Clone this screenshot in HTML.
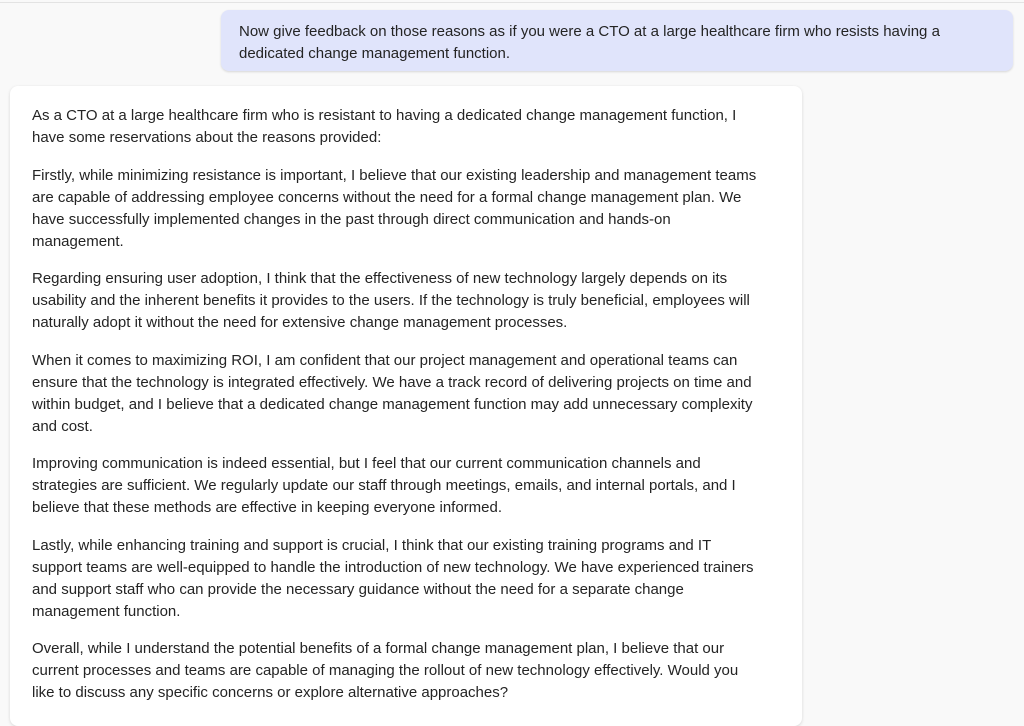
<!DOCTYPE html>
<html><head><meta charset="utf-8"><style>
html,body{margin:0;padding:0;}
body{width:1024px;height:711px;overflow:hidden;background:#f9f9f9;font-family:"Liberation Sans",sans-serif;font-size:15px;color:#242424;position:relative;}
.top{position:absolute;left:0;top:2px;width:1024px;height:1px;background:#e3e3e3;}
.user{position:absolute;left:221px;top:10px;width:792px;height:61px;background:#e0e4fb;border-radius:8px;box-shadow:0 1px 2px rgba(0,0,0,0.14);box-sizing:border-box;padding:11px 18px 0;line-height:22px;white-space:nowrap;}
.bot{position:absolute;left:10px;top:86px;width:792px;height:640px;background:#fff;border-radius:8px;box-shadow:0 1px 3px rgba(0,0,0,0.14);box-sizing:border-box;padding:19px 22px;line-height:22px;white-space:nowrap;}
.bot p{margin:0 0 15.5px 0;}
</style></head><body>
<div class="top"></div>
<div class="user">Now give feedback on those reasons as if you were a CTO at a large healthcare firm who resists having a<br>dedicated change management function.</div>
<div class="bot">
<p>As a CTO at a large healthcare firm who is resistant to having a dedicated change management function, I<br>have some reservations about the reasons provided:</p>
<p>Firstly, while minimizing resistance is important, I believe that our existing leadership and management teams<br>are capable of addressing employee concerns without the need for a formal change management plan. We<br>have successfully implemented changes in the past through direct communication and hands-on<br>management.</p>
<p>Regarding ensuring user adoption, I think that the effectiveness of new technology largely depends on its<br>usability and the inherent benefits it provides to the users. If the technology is truly beneficial, employees will<br>naturally adopt it without the need for extensive change management processes.</p>
<p>When it comes to maximizing ROI, I am confident that our project management and operational teams can<br>ensure that the technology is integrated effectively. We have a track record of delivering projects on time and<br>within budget, and I believe that a dedicated change management function may add unnecessary complexity<br>and cost.</p>
<p>Improving communication is indeed essential, but I feel that our current communication channels and<br>strategies are sufficient. We regularly update our staff through meetings, emails, and internal portals, and I<br>believe that these methods are effective in keeping everyone informed.</p>
<p>Lastly, while enhancing training and support is crucial, I think that our existing training programs and IT<br>support teams are well-equipped to handle the introduction of new technology. We have experienced trainers<br>and support staff who can provide the necessary guidance without the need for a separate change<br>management function.</p>
<p>Overall, while I understand the potential benefits of a formal change management plan, I believe that our<br>current processes and teams are capable of managing the rollout of new technology effectively. Would you<br>like to discuss any specific concerns or explore alternative approaches?</p>
</div>
</body></html>
